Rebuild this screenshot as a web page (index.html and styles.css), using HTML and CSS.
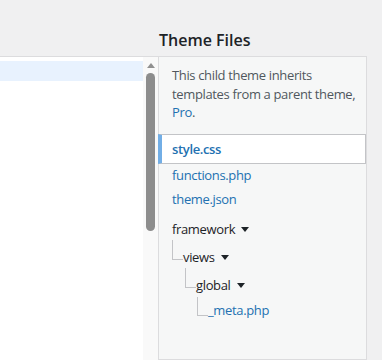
FILE: index.html
```html
<!DOCTYPE html>
<html lang="en">
<head>
    <meta charset="UTF-8">
    <meta name="viewport" content="width=device-width, initial-scale=1.0">
    <title>Edit Themes</title>
    <link rel="stylesheet" href="styles.css">
</head>
<body>
    <div class="editor-layout">
        <div class="header-spacer"></div>
        <h2 class="side-title">Theme Files</h2>

        <div class="code-editor">
            <div class="code-lines">
                <div class="active-line"></div>
            </div>
            <div class="scrollbar">
                <div class="scroll-arrow"></div>
                <div class="scroll-thumb"></div>
            </div>
        </div>

        <div class="template-side">
            <p class="howto">This child theme inherits templates from a parent theme, <a href="#">Pro</a>.</p>
            <ul class="file-list">
                <li class="current-file"><a href="#">style.css</a></li>
                <li class="file-link"><a href="#">functions.php</a></li>
                <li class="file-link"><a href="#">theme.json</a></li>
                <li class="folder">
                    <span class="folder-label">framework <span class="caret"></span></span>
                    <ul class="tree">
                        <li class="folder">
                            <div class="tree-row"><span class="branch"></span><span class="folder-label">views <span class="caret"></span></span></div>
                            <ul class="tree">
                                <li class="folder">
                                    <div class="tree-row"><span class="branch"></span><span class="folder-label">global <span class="caret"></span></span></div>
                                    <ul class="tree">
                                        <li class="tree-file">
                                            <div class="tree-row"><span class="branch"></span><a href="#">_meta.php</a></div>
                                        </li>
                                    </ul>
                                </li>
                            </ul>
                        </li>
                    </ul>
                </li>
            </ul>
        </div>
    </div>
</body>
</html>
```

FILE: styles.css
```css
body {
    margin: 0;
    background-color: #f0f0f1;
    font-family: "Open Sans", "Noto Sans", sans-serif;
    font-size: 13px;
    letter-spacing: -0.35px;
    color: #1d2327;
    height: 360px;
    overflow: hidden;
}

a {
    color: #2271b1;
    text-decoration: none;
}

.editor-layout {
    display: grid;
    grid-template-columns: 158px 209px;
    grid-template-rows: 56px 304px;
}

.side-title {
    margin: 0;
    padding: 29px 0 0 1px;
    font-size: 16px;
    font-weight: 600;
    line-height: 22px;
    letter-spacing: 0;
    color: #1d2327;
}

/* left code area */
.code-editor {
    display: flex;
    border-top: 1px solid #dcdcde;
    background-color: #ffffff;
}

.code-lines {
    flex: 1;
    padding-top: 4px;
}

.active-line {
    height: 20px;
    background-color: #e8f2fe;
}

.scrollbar {
    width: 15px;
    background-color: #f9f9f9;
    display: flex;
    flex-direction: column;
    align-items: center;
}

.scroll-arrow {
    width: 0;
    height: 0;
    margin-top: 6px;
    border-left: 4px solid transparent;
    border-right: 4px solid transparent;
    border-bottom: 5px solid #909090;
}

.scroll-thumb {
    width: 9px;
    height: 158px;
    margin-top: 5px;
    border-radius: 5px;
    background-color: #8d8d8d;
}

/* right file list */
.template-side {
    border: 1px solid #dcdcde;
    background-color: #f6f7f7;
}

.howto {
    margin: 0;
    padding: 9px 0 0 13px;
    line-height: 18.5px;
    color: #50575e;
}

.file-list,
.tree {
    list-style: none;
    margin: 0;
    padding: 0;
}

.file-list {
    margin-top: 12px;
}

.current-file {
    margin-left: -1px;
    margin-bottom: -1px;
    border: 1px solid #c3c4c7;
    border-left: 4px solid #72aee6;
    background-color: #ffffff;
    line-height: 28px;
}

.current-file a {
    display: block;
    padding-left: 10px;
    font-weight: 600;
}

.file-link a {
    display: block;
    padding-left: 13px;
    line-height: 24px;
}

.file-list > .folder {
    margin-top: 4px;
    padding-left: 13px;
}

.folder-label {
    display: inline-block;
    line-height: 28px;
    color: #1d2327;
}

.caret {
    display: inline-block;
    width: 0;
    height: 0;
    margin-left: 3px;
    margin-bottom: 2px;
    border-left: 4px solid transparent;
    border-right: 4px solid transparent;
    border-top: 5px solid #1d2327;
}

.tree .tree {
    margin-left: 13px;
}

.tree .tree .tree {
    margin-left: 12px;
}

.tree-row {
    display: flex;
    align-items: flex-start;
}

.branch {
    box-sizing: border-box;
    width: 11px;
    height: 20px;
    margin-top: -3px;
    border-left: 1px solid #c3c4c7;
    border-bottom: 1px solid #c3c4c7;
}

.tree-file a {
    line-height: 22px;
}

.tree-file .branch {
    height: 19px;
    margin-top: -2px;
}
```
